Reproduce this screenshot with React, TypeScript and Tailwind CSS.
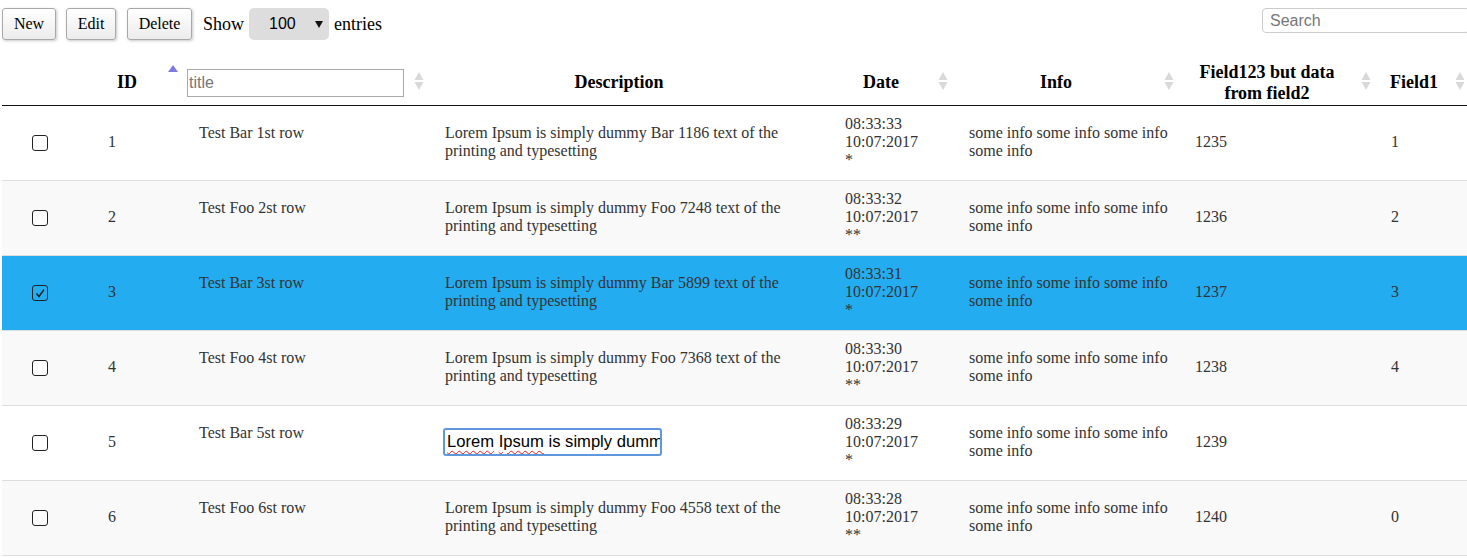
import React from "react";

type Row = {
  id: number;
  title: string;
  word: string;
  num: number;
  time: string;
  stars: string;
  field2: number;
  field1: string;
};

const rows: Row[] = [
  { id: 1, title: "Test Bar 1st row", word: "Bar", num: 1186, time: "08:33:33", stars: "*", field2: 1235, field1: "1" },
  { id: 2, title: "Test Foo 2st row", word: "Foo", num: 7248, time: "08:33:32", stars: "**", field2: 1236, field1: "2" },
  { id: 3, title: "Test Bar 3st row", word: "Bar", num: 5899, time: "08:33:31", stars: "*", field2: 1237, field1: "3" },
  { id: 4, title: "Test Foo 4st row", word: "Foo", num: 7368, time: "08:33:30", stars: "**", field2: 1238, field1: "4" },
  { id: 5, title: "Test Bar 5st row", word: "Bar", num: 0, time: "08:33:29", stars: "*", field2: 1239, field1: "" },
  { id: 6, title: "Test Foo 6st row", word: "Foo", num: 4558, time: "08:33:28", stars: "**", field2: 1240, field1: "0" },
];

const SELECTED = 3;
const EDITING = 5;

function SortBoth({ className }: { className: string }) {
  return (
    <svg width="10" height="20" viewBox="0 0 10 20" className={`absolute top-[15px] ${className}`}>
      <path d="M5 1 L9.5 9 L0.5 9 Z" fill="#d9d9d9" />
      <path d="M0.5 11 L9.5 11 L5 19 Z" fill="#d9d9d9" />
    </svg>
  );
}

function SortAsc() {
  return (
    <svg width="10" height="7" viewBox="0 0 10 7" className="absolute top-[9px] right-[4px]">
      <path d="M5 0 L10 7 L0 7 Z" fill="#7b7be0" />
    </svg>
  );
}

function Checkbox({ checked }: { checked: boolean }) {
  return (
    <span
      className={`inline-flex w-[16px] h-[16px] rounded-[3px] border border-[#222] align-middle items-center justify-center ${
        checked ? "bg-transparent" : "bg-white"
      }`}
    >
      {checked && (
        <svg width="12" height="12" viewBox="0 0 12 12">
          <polyline points="2.5,6.5 5,9.5 10,2.5" fill="none" stroke="#222" strokeWidth="1.4" />
        </svg>
      )}
    </span>
  );
}

const btn =
  "h-[32px] px-0 border border-[#a8a8a8] rounded-[3px] bg-linear-to-b from-white to-[#ececec] shadow-[1px_1px_3px_rgba(0,0,0,0.22)] text-[16px] text-black";

export default function App() {
  return (
    <div className="w-full overflow-hidden bg-white font-['Liberation_Serif',serif]">
      <div className="w-[1470px] pl-[2px]">
        {/* toolbar */}
        <div className="flex items-start justify-between h-[48px] pt-[8px]">
          <div className="flex items-center">
            <button className={`${btn} w-[54px]`}>New</button>
            <button className={`${btn} w-[50px] ml-[10px]`}>Edit</button>
            <button className={`${btn} w-[65px] ml-[11px]`}>Delete</button>
            <span className="ml-[11px] text-[18px] text-black">Show</span>
            <div className="ml-[5px] w-[80px] h-[32px] bg-[#dddddd] rounded-[5px] flex items-center pl-[20px] font-['Liberation_Sans',Arial,sans-serif] text-[16px] text-black">
              <span>100</span>
              <svg width="8" height="7" viewBox="0 0 8 7" className="ml-[19px]">
                <path d="M0 0 L8 0 L4 7 Z" fill="#111" />
              </svg>
            </div>
            <span className="ml-[5px] text-[18px] text-black">entries</span>
          </div>
          <input
            placeholder="Search"
            className="w-[208px] h-[25px] border border-[#cccccc] rounded-[4px] pl-[7px] font-['Liberation_Sans',Arial,sans-serif] text-[16px] placeholder:text-[#777] outline-none"
          />
        </div>

        {/* table */}
        <table className="w-[1468px] table-fixed border-separate border-spacing-0 mt-[8px]">
          <colgroup>
            <col className="w-[76px]" />
            <col className="w-[104px]" />
            <col className="w-[250px]" />
            <col className="w-[403px]" />
            <col className="w-[122px]" />
            <col className="w-[226px]" />
            <col className="w-[197px]" />
            <col className="w-[90px]" />
          </colgroup>
          <thead>
            <tr className="text-[18px] font-bold text-black leading-[21px]">
              <th className="h-[50px] border-b border-[#111] pt-[4px]" />
              <th className="relative h-[50px] border-b border-[#111] pt-[4px] pl-[10px] pr-[16px] text-center align-middle">
                ID
                <SortAsc />
              </th>
              <th className="relative h-[50px] border-b border-[#111] pt-[4px] pl-[5px] text-left align-middle">
                <input
                  placeholder="title"
                  className="block w-[217px] h-[28px] border border-[#aaaaaa] pl-[1px] font-['Liberation_Sans',Arial,sans-serif] text-[16px] font-normal placeholder:text-[#777] outline-none"
                />
                <SortBoth className="right-[8px]" />
              </th>
              <th className="h-[50px] border-b border-[#111] pt-[4px] pl-[10px] pr-[39px] text-center align-middle">
                Description
              </th>
              <th className="relative h-[50px] border-b border-[#111] pt-[4px] pl-[10px] pr-[40px] text-center align-middle">
                Date
                <SortBoth className="right-[9px]" />
              </th>
              <th className="relative h-[50px] border-b border-[#111] pt-[4px] pl-[10px] pr-[38px] text-center align-middle">
                Info
                <SortBoth className="right-[9px]" />
              </th>
              <th className="relative h-[50px] border-b border-[#111] pt-[4px] pl-[10px] pr-[39px] text-center align-middle">
                Field123 but data
                <br />
                from field2
                <SortBoth className="right-[9px]" />
              </th>
              <th className="relative h-[50px] border-b border-[#111] pt-[4px] pl-[10px] pr-[46px] text-center align-middle">
                Field1
                <SortBoth className="right-[5px]" />
              </th>
            </tr>
          </thead>
          <tbody className="text-[16px] text-[#333] leading-[18px]">
            {rows.map((r, i) => {
              const selected = r.id === SELECTED;
              const bg = selected ? "bg-[#24acf0]" : i % 2 === 1 ? "bg-[#f9f9f9]" : "bg-white";
              const td = `h-[75px] border-b border-[#dddddd] align-middle pb-[3px] ${bg}`;
              return (
                <tr key={r.id}>
                  <td className={`${td} text-center`}>
                    <Checkbox checked={selected} />
                  </td>
                  <td className={`${td} pl-[30px]`}>{r.id}</td>
                  <td className={`${td} pl-[17px] !pb-[20px]`}>{r.title}</td>
                  <td className={`${td} pl-[13px] pr-[20px]`}>
                    {r.id === EDITING ? (
                      <div className="w-[219px] h-[28px] -ml-[2px] border-2 border-[#5f97dc] rounded-[3px] overflow-hidden whitespace-nowrap pl-[2px] leading-[24px] font-['Liberation_Sans',Arial,sans-serif] text-[16.6px] text-black">
                        <span className="underline decoration-wavy decoration-[#e02020] decoration-1 underline-offset-[3px]">Lorem</span>{" "}
                        <span className="underline decoration-wavy decoration-[#e02020] decoration-1 underline-offset-[3px]">Ipsum</span>{" "}
                        is simply dummy Bar text of the printing
                      </div>
                    ) : (
                      <>
                        Lorem Ipsum is simply dummy {r.word} {r.num} text of the printing and typesetting
                      </>
                    )}
                  </td>
                  <td className={`${td} pl-[10px]`}>
                    {r.time}
                    <br />
                    10:07:2017
                    <br />
                    {r.stars}
                  </td>
                  <td className={`${td} pl-[12px] pr-[10px]`}>some info some info some info some info</td>
                  <td className={`${td} pl-[12px]`}>{r.field2}</td>
                  <td className={`${td} pl-[11px]`}>{r.field1}</td>
                </tr>
              );
            })}
          </tbody>
        </table>
      </div>
    </div>
  );
}
